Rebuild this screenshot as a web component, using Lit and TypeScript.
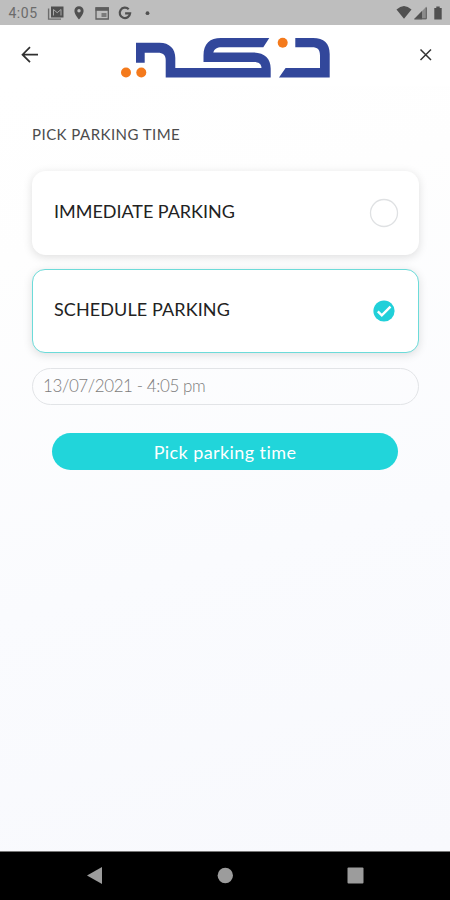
import { LitElement, html, css } from "lit";
import { customElement, state } from "lit/decorators.js";
import { classMap } from "lit/directives/class-map.js";

@customElement("status-bar")
class StatusBar extends LitElement {
  static styles = css`
    :host { display: block; height: 25px; background: #bebebe; }
    svg { display: block; }
    .clock { font: 14px Roboto, sans-serif; fill: #6b6b6b; }
  `;
  render() {
    return html`<svg width="450" height="25" viewBox="0 0 450 25" fill="#505050">
      <text class="clock" x="8.5" y="18" textLength="28.5">4:05</text>
      <path d="M48.6 8.500v10.600H61" fill="none" stroke="#6c6c6c" stroke-width="1.4" />
      <path d="M51 6.5h12.5v11H51z" />
      <path d="M53.5 15.500V9.500l3.700 3.200L61 9.500v6" fill="none" stroke="#a8a8a8" stroke-width="1" />
      <path d="M79 6.2a4.6 4.6 0 0 0-4.6 4.7C74.4 14.3 79 19.5 79 19.5s4.6-5.2 4.6-8.6A4.6 4.6 0 0 0 79 6.2zm0 6.3a1.7 1.7 0 1 1 0-3.4 1.7 1.7 0 0 1 0 3.4z" />
      <path d="M96 8h12.3v11H96z" fill="none" stroke="#5d5d5d" stroke-width="1.3" />
      <path d="M95.5 7.3h13.3v3.5H95.5z" fill="#5d5d5d" />
      <path d="M101.5 13h5v4h-5z" fill="#7b7b7b" />
      <path d="M128.7 9.3a5.2 5.2 0 1 0 1.4 4.1h-5" fill="none" stroke="#505050" stroke-width="2.2" />
      <circle cx="147.5" cy="13.200" r="1.900" />
      <path d="M396.5 9.5q7.500-7 15 0l-7.500 9.300z" />
      <path d="M414 19.3 426.500 6.500v12.800z" fill="#8b8b8b" />
      <path d="M414 19.3l8-8.200v8.200z" />
      <path d="M426.3 7.500v11.300H414.800" fill="none" stroke="#5c5c5c" />
      <path d="M434.3 8h2v-1.500h3.400V8h2v11.500h-7.400z" />
    </svg>`;
  }
}

@customElement("brand-header")
class BrandHeader extends LitElement {
  static styles = css`
    :host { display: grid; grid-template-columns: 118px 216px 1fr; height: 61px; align-items: start; background: #fff; }
    svg { display: block; }
    .back { margin: 21px 0 0 20px; }
    .logo { margin-top: 9px; }
    .close { margin: 23px 0 0 85px; }
  `;
  render() {
    return html`
      <svg class="back" width="20" height="18" viewBox="0 0 20 18" fill="none" stroke="#303030" stroke-width="1.7">
        <path d="M18 8.7H2.6M10 1.2 2.5 8.7l7.5 7.5" />
      </svg>
      <svg class="logo" width="216" height="48" viewBox="118 34 216 48" fill="#32479b">
        <path d="M136 42.7h23.500c10 0 15.800 6 15.800 15.300v10H261.500c0-4-3-6-7.500-6H203.500V55.500C203.500 43.500 210 38 221 38h48.300l-6 9.300H221.500c-4.500 0-7 1.500-8.200 5.200H253c11.500 0 17.700 6 17.700 16v9H165.700V60c0-5-2.700-7.300-8-7.300H144.700v10H136z" />
        <path d="M295.3 38h17.700c11 0 16.700 5.500 16.700 16v23.500H279l6.600-9.500H320V55.500c0-6-2.500-8.200-8-8.200H295.300z" />
        <g fill="#f47a1c"><circle cx="126" cy="72.5" r="5" /><circle cx="141.3" cy="72.5" r="5" /><circle cx="282.7" cy="42.8" r="5" /></g>
      </svg>
      <svg class="close" width="14" height="14" viewBox="0 0 14 14" fill="none" stroke="#333" stroke-width="1.5">
        <path d="M1.5 1.5l10.500 10.500M12 1.5 1.5 12" />
      </svg>`;
  }
}

@customElement("app-root")
class AppRoot extends LitElement {
  static styles = css`
    :host { display: flex; flex-direction: column; width: 450px; height: 900px; overflow: hidden; background: #fff; font-family: Lato, "Open Sans", sans-serif; }
    .main { flex: 1; padding: 0 31px 0 32px; background: linear-gradient(165deg, #fff 0%, #fefefe 20%, #fafbfe 60%, #f8f9fd 100%); }
    .title { margin: 38px 0 0; height: 20px; font-size: 15px; line-height: 20px; font-weight: 400; color: #4c4c4c; letter-spacing: 0.46px; }
    .option { display: flex; box-sizing: border-box; height: 84px; margin-top: 14px; padding: 0 20px 0 21px; align-items: center; justify-content: space-between; border: 1px solid #fff; border-radius: 13px; background: #fff; box-shadow: 0 2px 10px rgba(0, 0, 0, 0.13); cursor: pointer; }
    .title + .option { margin-top: 27px; }
    .option.selected { border-color: #6cdbd9; }
    .label { font-size: 18px; line-height: 24px; color: #222; padding-bottom: 4px; }
    .immediate { letter-spacing: -0.03px; }
    .schedule { letter-spacing: 0.1px; }
    .radio { display: block; margin-right: -1px; }
    .date { display: flex; box-sizing: border-box; align-items: center; height: 37px; margin-top: 15px; padding: 0 10px 3px; border: 1px solid #e2e4e7; border-radius: 19px; color: #7c7c7c; font-size: 17px; font-weight: 300; letter-spacing: -0.41px; }
    .submit { display: block; width: 346px; height: 37px; margin: 28px 0 0 20px; padding: 0; border: 0; border-radius: 19px; background: #21d5da; color: #fff; font: 18px Lato, sans-serif; letter-spacing: 0.42px; }
    .nav { display: flex; height: 49px; background: #000; border-top: 1px solid #777; box-sizing: border-box; }
  `;

  @state() selected = "schedule";

  option(id: string, text: string) {
    const on = this.selected === id;
    return html`<div class=${classMap({ option: true, selected: on })} @click=${() => (this.selected = id)}>
      <span class=${classMap({ label: true, [id]: true })}>${text}</span>
      ${on
        ? html`<svg class="radio" width="30" height="30" viewBox="0 0 30 30"><circle cx="15" cy="15" r="10.6" fill="#21d0d9" /><path d="M8.8 15.4l4 4L21.5 10.7" fill="none" stroke="#fff" stroke-width="2.4" /></svg>`
        : html`<svg class="radio" width="30" height="30" viewBox="0 0 30 30"><circle cx="15" cy="15" r="13.5" fill="none" stroke="#dfe1e3" stroke-width="1.3" /></svg>`}
    </div>`;
  }

  render() {
    return html`
      <status-bar></status-bar>
      <brand-header></brand-header>
      <div class="main">
        <div class="title">PICK PARKING TIME</div>
        ${this.option("immediate", "IMMEDIATE PARKING")}
        ${this.option("schedule", "SCHEDULE PARKING")}
        <div class="date">13/07/2021 - 4:05 pm</div>
        <button class="submit">Pick parking time</button>
      </div>
      <div class="nav">
        <svg width="450" height="48" viewBox="0 0 450 48" fill="#9c9c9c">
          <path d="M87 23.5l15-8.500v17z" /><circle cx="225.3" cy="23.5" r="7.7" /><rect x="347.5" y="15.5" width="16" height="16" rx="1" />
        </svg>
      </div>`;
  }
}
